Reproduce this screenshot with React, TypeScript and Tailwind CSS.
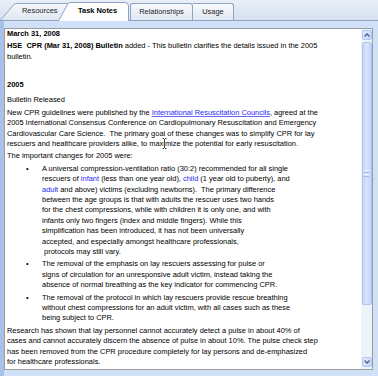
import React from "react";

function Chevron({ up }: { up?: boolean }) {
  return (
    <svg width="6" height="4" viewBox="0 0 6 4" className="block">
      <path
        d={up ? "M0.5 3.5 L3 1 L5.5 3.5" : "M0.5 0.5 L3 3 L5.5 0.5"}
        fill="none"
        stroke="#4a5f8c"
        strokeWidth="1.3"
      />
    </svg>
  );
}

function Scrollbar() {
  return (
    <div className="w-[11px] shrink-0 flex flex-col pt-[1px] pb-[2px] bg-[#eef3fc]">
      <div className="h-[10px] mx-[0.5px] rounded-[2px] border border-[#b3c7f3] bg-gradient-to-br from-[#e3ecfe] to-[#c3d4f9] flex items-center justify-center">
        <Chevron up />
      </div>
      <div className="mt-[2px] h-[263px] mx-[0.5px] rounded-[2px] border border-[#afc4f1] bg-gradient-to-r from-[#c6d7fb] via-[#d8e4fd] to-[#c2d3f9] flex flex-col items-center justify-center gap-[1px]">
        <div className="w-[5px] h-[1px] bg-[#eef4ff]" />
        <div className="w-[5px] h-[1px] bg-[#9fb6e6]" />
        <div className="w-[5px] h-[1px] bg-[#eef4ff]" />
        <div className="w-[5px] h-[1px] bg-[#9fb6e6]" />
      </div>
      <div className="flex-1" />
      <div className="h-[10px] mx-[0.5px] rounded-[2px] border border-[#b3c7f3] bg-gradient-to-br from-[#e3ecfe] to-[#c3d4f9] flex items-center justify-center">
        <Chevron />
      </div>
    </div>
  );
}

function Link({ children, underline }: { children: React.ReactNode; underline?: boolean }) {
  return (
    <span className={underline ? "text-[#1f1ff2] underline decoration-[#6a6af5]" : "text-[#1f1ff2]"}>
      {children}
    </span>
  );
}

function Bullet({ children, className }: { children: React.ReactNode; className?: string }) {
  return (
    <div className={"flex " + (className ?? "")}>
      <div className="w-[35px] shrink-0 pl-[19px]">•</div>
      <div className="whitespace-nowrap">{children}</div>
    </div>
  );
}

export default function App() {
  return (
    <div className="w-[378px] h-[376px] overflow-hidden flex flex-col bg-[#d0e0f6] font-['Liberation_Sans',Arial,sans-serif] text-[7.45px] leading-[10.4px] text-black">
      {/* Tab strip */}
      <div className="h-[21px] shrink-0 flex items-end border-b border-[#8ea4c5] bg-gradient-to-b from-[#e9eff7] to-[#d5e0ef]">
        <div className="relative w-[70px] h-[17px] flex items-center pl-[22px]">
          <svg className="absolute inset-0" width="70" height="17" viewBox="0 0 70 17">
            <defs>
              <linearGradient id="tg1" x1="0" y1="0" x2="0" y2="1">
                <stop offset="0" stopColor="#f6f8fb" />
                <stop offset="1" stopColor="#dfe7f2" />
              </linearGradient>
            </defs>
            <path d="M0.5 17 L14 1.5 Q15 0.5 17 0.5 L69.5 0.5 L69.5 17" fill="url(#tg1)" stroke="#8ea4c5" />
          </svg>
          <span className="relative text-[#1b1b1b]">Resources</span>
        </div>
        <div className="relative z-10 ml-[-12px] mb-[-1px] w-[71px] h-[19px] flex items-center pl-[20px] pb-[1px]">
          <svg className="absolute inset-0" width="71" height="19" viewBox="0 0 71 19">
            <path d="M0.5 19 L10 1.5 Q10.8 0.5 12 0.5 L67 0.5 Q70.5 0.5 70.5 4 L70.5 19" fill="#ffffff" stroke="#8ea4c5" />
          </svg>
          <span className="relative font-bold">Task Notes</span>
        </div>
        <div className="ml-[1px] w-[63px] h-[17px] flex items-center justify-center rounded-t-[3px] border-l border-t border-r border-[#8ea4c5] bg-gradient-to-b from-[#f7f9fc] to-[#e1e8f3] text-[#1b1b1b]">
          Relationships
        </div>
        <div className="w-[41px] h-[17px] flex items-center justify-center rounded-tr-[3px] border-t border-r border-[#8ea4c5] bg-gradient-to-b from-[#f7f9fc] to-[#e1e8f3] text-[#1b1b1b]">
          Usage
        </div>
      </div>

      {/* Body */}
      <div className="flex flex-1 min-h-0">
        <div className="w-[4px] shrink-0 bg-[#a7c1e9]" />
        <div className="flex-1 flex flex-col pt-[7px] pb-[6px] pr-[5px] min-w-0">
          <div className="flex-1 flex min-h-0 border border-[#9c9c9c] bg-white">
            <div className="flex-1 min-w-0 overflow-hidden pl-[2px]">
              <div className="font-bold whitespace-nowrap">March 31, 2008</div>
              <div className="mt-[2px] whitespace-nowrap">
                <span className="font-bold">HSE&nbsp; CPR (Mar 31, 2008) Bulletin</span> added - This bulletin clarifies the details issued in the 2005
                <br />
                bulletin.
              </div>
              <div className="mt-[17.5px] font-bold">2005</div>
              <div className="mt-[4.6px]">Bulletin Released</div>
              <div className="mt-[2.6px] whitespace-nowrap">
                New CPR guidelines were published by the <Link underline>International Resuscitation Councils</Link>, agreed at the
                <br />
                2005 International Consensus Conference on Cardiopulmonary Resuscitation and Emergency
                <br />
                Cardiovascular Care Science.&nbsp; The primary goal of these changes was to simplify CPR for lay
                <br />
                rescuers and healthcare providers alike, to max
                <span className="relative">
                  i
                  <svg className="absolute left-[-1.5px] top-[-1px]" width="5" height="11" viewBox="0 0 5 11">
                    <path d="M0.5 0.5 H2 M3 0.5 H4.5 M2.5 1 V10 M0.5 10.5 H2 M3 10.5 H4.5" stroke="#ffffff" strokeWidth="1.6" fill="none" />
                    <path d="M0.5 0.5 H2 M3 0.5 H4.5 M2.5 1 V10 M0.5 10.5 H2 M3 10.5 H4.5" stroke="#111111" strokeWidth="0.8" fill="none" />
                  </svg>
                </span>
                mize the potential for early resuscitation.
              </div>
              <div className="mt-[2px] whitespace-nowrap">The important changes for 2005 were:</div>
              <Bullet className="mt-[2px]">
                A universal compression-ventilation ratio (30:2) recommended for all single
                <br />
                rescuers of <Link>infant</Link> (less than one year old), <Link>child</Link> (1 year old to puberty), and
                <br />
                <Link>adult</Link> and above) victims (excluding newborns).&nbsp; The primary difference
                <br />
                between the age groups is that with adults the rescuer uses two hands
                <br />
                for the chest compressions, while with children it is only one, and with
                <br />
                infants only two fingers (index and middle fingers). While this
                <br />
                simplification has been introduced, it has not been universally
                <br />
                accepted, and especially amongst healthcare professionals,
                <br />
                &nbsp;protocols may still vary.
              </Bullet>
              <Bullet className="mt-[2px]">
                The removal of the emphasis on lay rescuers assessing for pulse or
                <br />
                signs of circulation for an unresponsive adult victim, instead taking the
                <br />
                absence of normal breathing as the key indicator for commencing CPR.
              </Bullet>
              <Bullet className="mt-[2px]">
                The removal of the protocol in which lay rescuers provide rescue breathing
                <br />
                without chest compressions for an adult victim, with all cases such as these
                <br />
                being subject to CPR.
              </Bullet>
              <div className="mt-[2px] whitespace-nowrap">
                Research has shown that lay personnel cannot accurately detect a pulse in about 40% of
                <br />
                cases and cannot accurately discern the absence of pulse in about 10%. The pulse check step
                <br />
                has been removed from the CPR procedure completely for lay persons and de-emphasized
                <br />
                for healthcare professionals.
              </div>
            </div>
            <Scrollbar />
          </div>
        </div>
      </div>
    </div>
  );
}
